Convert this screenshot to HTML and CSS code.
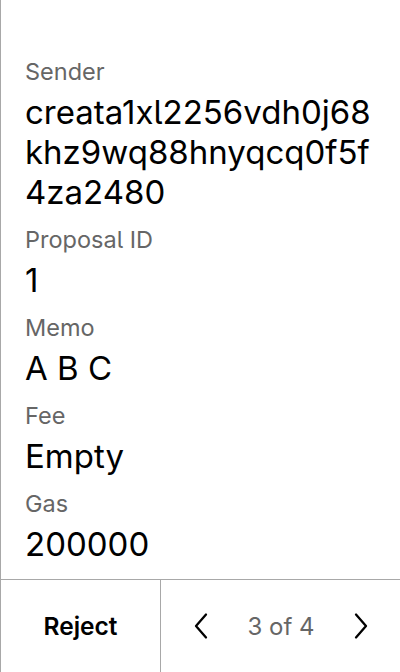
FILE: index.html
```html
<!DOCTYPE html>
<html>
<head>
<meta charset="utf-8">
<link rel="stylesheet" href="styles.css">
</head>
<body>
<div class="app">
  <div class="details">
    <div class="field">
      <div class="label">Sender</div>
      <div class="value">creata1xl2256vdh0j68khz9wq88hnyqcq0f5f4za2480</div>
    </div>
    <div class="field">
      <div class="label">Proposal ID</div>
      <div class="value">1</div>
    </div>
    <div class="field">
      <div class="label">Memo</div>
      <div class="value">A B C</div>
    </div>
    <div class="field">
      <div class="label">Fee</div>
      <div class="value">Empty</div>
    </div>
    <div class="field">
      <div class="label">Gas</div>
      <div class="value">200000</div>
    </div>
  </div>
  <div class="footer">
    <div class="reject">Reject</div>
    <div class="pager">
      <svg class="chev" width="18" height="28" viewBox="0 0 18 28"><path d="M14 2.5 L4 14 L14 25.5" fill="none" stroke="#000" stroke-width="2.3" stroke-linecap="round" stroke-linejoin="round"/></svg>
      <span class="count">3 of 4</span>
      <svg class="chev" width="18" height="28" viewBox="0 0 18 28"><path d="M4 2.5 L14 14 L4 25.5" fill="none" stroke="#000" stroke-width="2.3" stroke-linecap="round" stroke-linejoin="round"/></svg>
    </div>
  </div>
</div>
</body>
</html>
```
FILE: styles.css
```css
html, body {
  margin: 0;
  padding: 0;
  background: #fff;
}
body {
  font-family: Inter, "Noto Sans", sans-serif;
  font-feature-settings: "cv05" 1;
  color: #000;
}
.app {
  width: 400px;
  height: 672px;
  box-sizing: border-box;
  border-left: 1px solid #a8a8a8;
  display: flex;
  flex-direction: column;
}
.details {
  flex: 1;
  padding: 56px 24px 0 24px;
  display: flex;
  flex-direction: column;
  gap: 12px;
}
.field {
  display: flex;
  flex-direction: column;
  gap: 4px;
}
.label {
  font-size: 23.5px;
  line-height: 32px;
  color: #666;
}
.value {
  font-size: 33px;
  line-height: 40px;
  word-break: break-all;
}
.footer {
  height: 92px;
  border-top: 1px solid #a8a8a8;
  display: flex;
}
.reject {
  width: 159px;
  border-right: 1px solid #a8a8a8;
  display: flex;
  align-items: center;
  justify-content: center;
  font-size: 24.5px;
  font-weight: 600;
}
.pager {
  flex: 1;
  display: flex;
  align-items: center;
  justify-content: space-between;
  padding: 0 30px 0 31px;
}
.count {
  font-size: 24px;
  color: #666;
}
.chev {
  display: block;
}
```
